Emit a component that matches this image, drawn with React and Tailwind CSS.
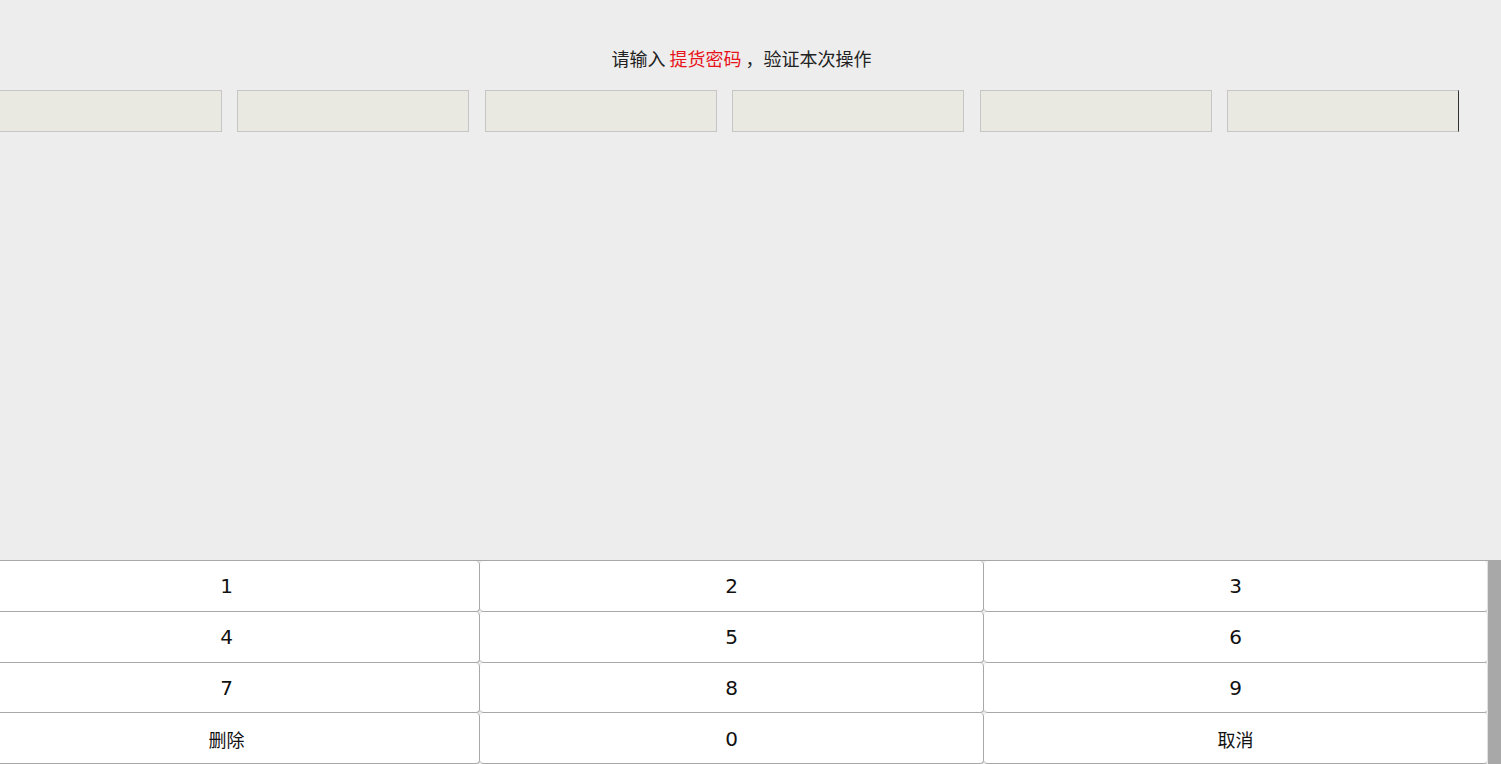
export default function App() {
  const keys = ["1", "2", "3", "4", "5", "6", "7", "8", "9", "删除", "0", "取消"];
  return (
    <div
      className="w-[1501px] h-[764px] overflow-hidden bg-[#ededed] flex flex-col"
      style={{ fontFamily: '"Noto Sans CJK SC", "DejaVu Sans", sans-serif' }}
    >
      <div className="h-[90px] w-[1483px] pt-[45px] flex justify-center text-[18px] leading-[26px] text-[#222]">
        <span className="whitespace-pre">
          请输入 <span className="text-[#e8141b]">提货密码</span> ，验证本次操作
        </span>
      </div>
      <div className="flex gap-[15.5px] ml-[-10.5px]">
        {[0, 1, 2, 3, 4, 5].map((i) => (
          <div
            key={i}
            className={
              "w-[232px] h-[42px] shrink-0 bg-[#e9e8e1] border border-[#c6c6c6] " +
              (i === 5 ? "border-r-[#333]" : "")
            }
          />
        ))}
      </div>
      <div className="flex-1" />
      <div className="flex h-[204px] ml-[-26px]">
        <div className="w-[1514px] shrink-0 grid grid-cols-[506px_504px_504px] grid-rows-4 border-t border-[#a8a8a8]">
          {keys.map((k, i) => (
            <div
              key={i}
              className={
                "flex items-center justify-center bg-white rounded-[4px] border-b border-[#a8a8a8] " +
                (i % 3 !== 2 ? "border-r" : "border-r border-r-[#e0e0e0]") +
                (k.length > 1 ? " text-[18px]" : " text-[20px]") +
                " text-[#111]"
              }
              style={{ fontFamily: k.length > 1 ? '"Noto Sans CJK SC", sans-serif' : '"DejaVu Sans", sans-serif' }}
            >
              <span className={k.length > 1 ? "mt-[3px]" : "mt-[1px]"}>{k}</span>
            </div>
          ))}
        </div>
        <div className="flex-1 bg-[#a8a8a8]" />
      </div>
    </div>
  );
}
